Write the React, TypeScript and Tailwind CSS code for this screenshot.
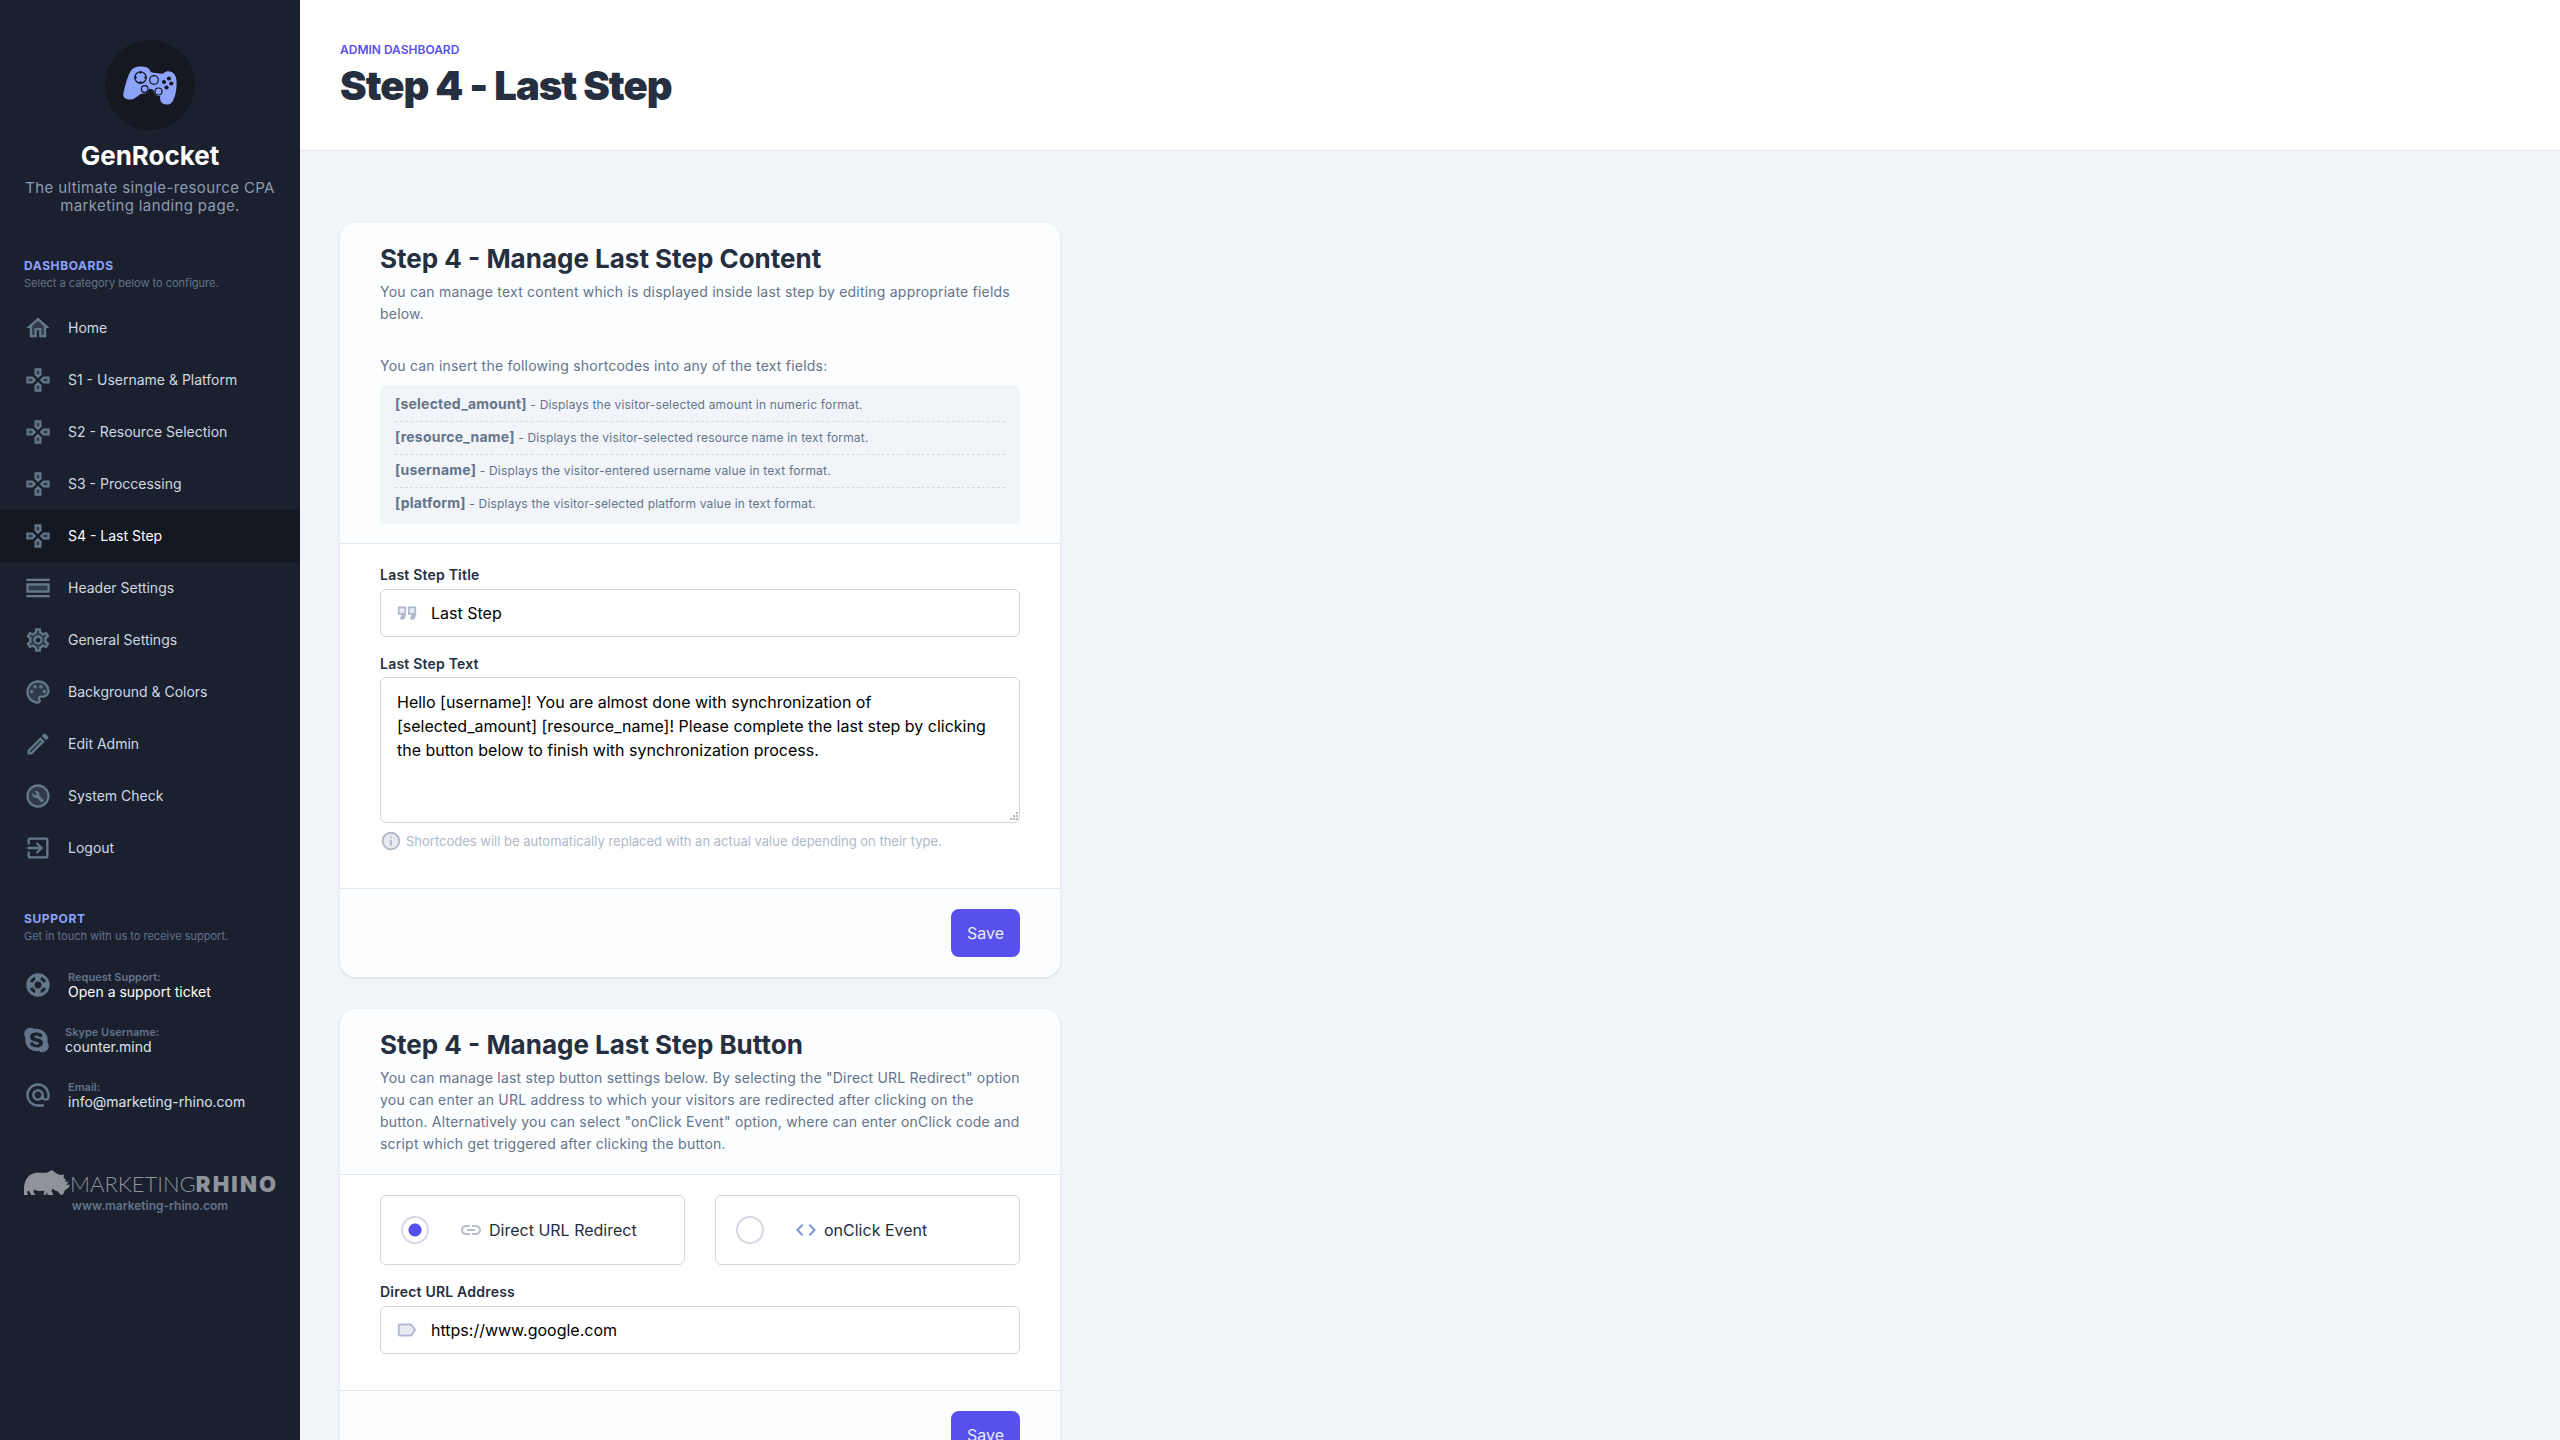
import { useState } from "react";
import type { ReactNode } from "react";
import { FaSkype } from "react-icons/fa";

type IconProps = { className?: string };

function Icon({ className, children }: { className?: string; children: ReactNode }) {
  return (
    <svg viewBox="0 0 24 24" fill="currentColor" aria-hidden="true" className={className}>
      {children}
    </svg>
  );
}

const HomeIcon = (p: IconProps) => (
  <Icon {...p}>
    <path d="M5 10v10h5v-6h4v6h5V10l-7-6.3z" opacity=".3" />
    <path d="M12 3L2 12h3v8h6v-6h2v6h6v-8h3L12 3zm5 15h-2v-6H9v6H7v-7.81l5-4.5 5 4.5V18z" />
  </Icon>
);

const GamesIcon = (p: IconProps) => (
  <Icon {...p}>
    <path d="M11 6.67l1 1 1-1V4h-2zM16.33 12l1 1H20v-2h-2.67zM4 11v2h2.67l1-1-1-1zm7 6.33V20h2v-2.67l-1-1z" opacity=".3" />
    <path d="M2 9v6h5.5l3-3-3-3H2zm4.67 4H4v-2h2.67l1 1-1 1zM22 9h-5.5l-3 3 3 3H22V9zm-2 4h-2.67l-1-1 1-1H20v2zm-5 3.5l-3-3-3 3V22h6v-5.5zM13 20h-2v-2.67l1-1 1 1V20zM9 7.5l3 3 3-3V2H9v5.5zM11 4h2v2.67l-1 1-1-1V4z" />
  </Icon>
);

const HeaderIcon = (p: IconProps) => (
  <Icon {...p}>
    <path d="M4 10h16v4H4z" opacity=".3" />
    <path d="M2 4h20v2H2zM2 18h20v2H2zM2 8v8h20V8H2zm18 6H4v-4h16v4z" />
  </Icon>
);

const SettingsIcon = (p: IconProps) => (
  <Icon {...p}>
    <path d="M19.28 8.6l-.7-1.21-1.27.51-1.06.43-.91-.7c-.39-.3-.8-.54-1.23-.71l-1.06-.43-.16-1.13L12.7 4h-1.4l-.19 1.35-.16 1.13-1.06.44c-.41.17-.82.41-1.25.73l-.9.68-1.05-.42-1.27-.52-.7 1.21 1.08.84.89.7-.14 1.13c-.03.3-.05.53-.05.73s.02.43.05.73l.14 1.13-.89.7-1.08.84.7 1.21 1.27-.51 1.06-.43.91.7c.39.3.8.54 1.23.71l1.06.43.16 1.13.19 1.36h1.39l.19-1.35.16-1.13 1.06-.43c.41-.17.82-.41 1.25-.73l.9-.68 1.04.42 1.27.51.7-1.21-1.08-.84-.89-.7.14-1.13c.04-.31.05-.52.05-.73 0-.21-.02-.43-.05-.73l-.14-1.13.89-.7 1.1-.84zM12 16c-2.21 0-4-1.79-4-4s1.79-4 4-4 4 1.79 4 4-1.79 4-4 4z" opacity=".3" />
    <path d="M19.43 12.98c.04-.32.07-.64.07-.98 0-.34-.03-.66-.07-.98l2.11-1.65c.19-.15.24-.42.12-.64l-2-3.46c-.09-.16-.26-.25-.44-.25-.06 0-.12.01-.17.03l-2.49 1c-.52-.4-1.08-.73-1.69-.98l-.38-2.65C14.46 2.18 14.25 2 14 2h-4c-.25 0-.46.18-.49.42l-.38 2.65c-.61.25-1.17.59-1.69.98l-2.49-1c-.06-.02-.12-.03-.18-.03-.17 0-.34.09-.43.25l-2 3.46c-.13.22-.07.49.12.64l2.11 1.65c-.04.32-.07.65-.07.98s.03.66.07.98l-2.11 1.65c-.19.15-.24.42-.12.64l2 3.46c.09.16.26.25.44.25.06 0 .12-.01.17-.03l2.49-1c.52.4 1.08.73 1.69.98l.38 2.65c.03.24.24.42.49.42h4c.25 0 .46-.18.49-.42l.38-2.65c.61-.25 1.17-.59 1.69-.98l2.49 1c.06.02.12.03.18.03.17 0 .34-.09.43-.25l2-3.46c.12-.22.07-.49-.12-.64l-2.11-1.65zm-1.98-1.71c.04.31.05.52.05.73 0 .21-.02.43-.05.73l-.14 1.13.89.7 1.08.84-.7 1.21-1.27-.51-1.04-.42-.9.68c-.43.32-.84.56-1.25.73l-1.06.43-.16 1.13-.2 1.35h-1.4l-.19-1.35-.16-1.13-1.06-.43c-.43-.18-.83-.41-1.23-.71l-.91-.7-1.06.43-1.27.51-.7-1.21 1.08-.84.89-.7-.14-1.13c-.03-.31-.05-.54-.05-.74s.02-.43.05-.73l.14-1.13-.89-.7-1.08-.84.7-1.21 1.27.51 1.04.42.9-.68c.43-.32.84-.56 1.25-.73l1.06-.43.16-1.13.2-1.35h1.39l.19 1.35.16 1.13 1.06.43c.43.18.83.41 1.23.71l.91.7 1.06-.43 1.27-.51.7 1.21-1.07.85-.89.7.14 1.13zM12 8c-2.21 0-4 1.79-4 4s1.79 4 4 4 4-1.79 4-4-1.79-4-4-4zm0 6c-1.1 0-2-.9-2-2s.9-2 2-2 2 .9 2 2-.9 2-2 2z" />
  </Icon>
);

const PaletteIcon = (p: IconProps) => (
  <Icon {...p}>
    <path d="M12 4c-4.41 0-8 3.59-8 8s3.59 8 8 8c.28 0 .5-.22.5-.5 0-.16-.08-.28-.14-.35-.41-.46-.63-1.05-.63-1.65 0-1.38 1.12-2.5 2.5-2.5H16c2.21 0 4-1.79 4-4 0-3.86-3.59-7-8-7z" opacity=".3" />
    <path d="M12 2C6.49 2 2 6.49 2 12s4.49 10 10 10c1.38 0 2.5-1.12 2.5-2.5 0-.61-.23-1.21-.64-1.67-.08-.09-.13-.21-.13-.33 0-.28.22-.5.5-.5H16c3.31 0 6-2.69 6-6 0-4.96-4.49-9-10-9zm4 13h-1.77c-1.38 0-2.5 1.12-2.5 2.5 0 .61.22 1.19.63 1.65.06.07.14.19.14.35 0 .28-.22.5-.5.5-4.41 0-8-3.59-8-8s3.59-8 8-8 8 3.14 8 7c0 2.21-1.79 4-4 4z" />
    <circle cx="6.5" cy="11.5" r="1.5" />
    <circle cx="9.5" cy="7.5" r="1.5" />
    <circle cx="14.5" cy="7.5" r="1.5" />
    <circle cx="17.5" cy="11.5" r="1.5" />
  </Icon>
);

const EditIcon = (p: IconProps) => (
  <Icon {...p}>
    <path d="M5 18.08V19h.92l9.06-9.06-.92-.92z" opacity=".3" />
    <path d="M20.71 7.04a.996.996 0 000-1.41l-2.34-2.34c-.2-.2-.45-.29-.71-.29s-.51.1-.7.29l-1.83 1.83 3.75 3.75 1.83-1.83zM3 17.25V21h3.75L17.81 9.94l-3.75-3.75L3 17.25zM5.92 19H5v-.92l9.06-9.06.92.92L5.92 19z" />
  </Icon>
);

const BuildIcon = (p: IconProps) => (
  <Icon {...p}>
    <circle cx="12" cy="12" r="9" opacity=".3" />
    <path d="M12 2C6.48 2 2 6.48 2 12s4.48 10 10 10 10-4.48 10-10S17.52 2 12 2zm0 18c-4.41 0-8-3.59-8-8s3.59-8 8-8 8 3.59 8 8-3.59 8-8 8z" />
    <path d="M16.9 15.49l-3.78-3.78c.43-1.06.18-2.33-.69-3.19-.94-.95-2.38-1.11-3.49-.48l2.06 2.06-1.4 1.4-2.07-2.07c-.64 1.1-.48 2.54.48 3.49.86.87 2.13 1.12 3.19.69l3.78 3.78c.19.19.49.19.68 0l1.24-1.22c.19-.19.19-.49 0-.68z" />
  </Icon>
);

const LogoutIcon = (p: IconProps) => (
  <Icon {...p}>
    <path d="M10.09 15.59L11.5 17l5-5-5-5-1.41 1.41L12.67 11H3v2h9.67l-2.58 2.59zM19 3H5c-1.11 0-2 .9-2 2v4h2V5h14v14H5v-4H3v4c0 1.1.89 2 2 2h14c1.1 0 2-.9 2-2V5c0-1.1-.9-2-2-2z" />
  </Icon>
);

const SupportIcon = (p: IconProps) => (
  <Icon {...p}>
    <path
      fillRule="evenodd"
      d="M12 2a10 10 0 100 20 10 10 0 000-20zM12 9a3 3 0 110 6 3 3 0 010-6zM15 5a8 8 0 014 4l-2.4 1a5 5 0 00-2.6-2.6zM9 5l1 2.4a5 5 0 00-2.6 2.6L5 9a8 8 0 014-4zM5 15l2.4-1a5 5 0 002.6 2.6L9 19a8 8 0 01-4-4zM15 19l-1-2.4a5 5 0 002.6-2.6l2.4 1a8 8 0 01-4 4z"
    />
  </Icon>
);

const EmailIcon = (p: IconProps) => (
  <Icon {...p}>
    <path d="M12 2C6.48 2 2 6.48 2 12s4.48 10 10 10h5v-2h-5c-4.34 0-8-3.66-8-8s3.66-8 8-8 8 3.66 8 8v1.43c0 .79-.71 1.57-1.5 1.57s-1.5-.78-1.5-1.57V12c0-2.76-2.24-5-5-5s-5 2.24-5 5 2.24 5 5 5c1.38 0 2.64-.56 3.54-1.47.65.89 1.77 1.47 2.96 1.47 1.97 0 3.5-1.6 3.5-3.57V12c0-5.52-4.48-10-10-10zm0 13c-1.66 0-3-1.34-3-3s1.34-3 3-3 3 1.34 3 3-1.34 3-3 3z" />
  </Icon>
);

const QuoteIcon = (p: IconProps) => (
  <Icon {...p}>
    <path d="M4 8v4h5V8zm11 0v4h5V8z" opacity=".3" />
    <path
      fillRule="evenodd"
      d="M2 5h9v9l-2 5H4l2-5H2zM4 7v5h5V7zM13 5h9v9l-2 5h-5l2-5h-4zM15 7v5h5V7z"
    />
  </Icon>
);

const InfoIcon = (p: IconProps) => (
  <Icon {...p}>
    <circle cx="12" cy="12" r="9" opacity=".3" />
    <path d="M11 7h2v2h-2zm0 4h2v6h-2zm1-9C6.48 2 2 6.48 2 12s4.48 10 10 10 10-4.48 10-10S17.52 2 12 2zm0 18c-4.41 0-8-3.59-8-8s3.59-8 8-8 8 3.59 8 8-3.59 8-8 8z" />
  </Icon>
);

const LinkIcon = (p: IconProps) => (
  <Icon {...p}>
    <path d="M17 7h-4v2h4c1.65 0 3 1.35 3 3s-1.35 3-3 3h-4v2h4c2.76 0 5-2.24 5-5s-2.24-5-5-5zm-6 8H7c-1.65 0-3-1.35-3-3s1.35-3 3-3h4V7H7c-2.76 0-5 2.24-5 5s2.24 5 5 5h4v-2zm-3-4h8v2H8z" />
  </Icon>
);

const CodeIcon = (p: IconProps) => (
  <Icon {...p}>
    <path d="M9.4 16.6L4.8 12l4.6-4.6L8 6l-6 6 6 6 1.4-1.4zm5.2 0l4.6-4.6-4.6-4.6L16 6l6 6-6 6-1.4-1.4z" />
  </Icon>
);

const LabelIcon = (p: IconProps) => (
  <Icon {...p}>
    <path d="M16 7H4v10h12l3.55-5z" opacity=".3" />
    <path d="M17.63 5.84C17.27 5.33 16.67 5 16 5H4C2.9 5 2 5.9 2 7v10c0 1.1.9 2 2 2h12c.67 0 1.27-.33 1.63-.84L22 12l-4.37-6.16zM16 17H4V7h12l3.55 5L16 17z" />
  </Icon>
);

function Gamepad() {
  return (
    <svg viewBox="0 0 54 39" className="w-[54px]" aria-hidden="true">
      <path
        fill="#8da2fb"
        d="M17 .5c4-.5 8 .5 9.500 3 .8 1.500 1 2.500 2.500 3l10 1.200C41 7.500 42 5.200 45 5.200c5.500 0 8 4 8.500 9 .5 8-1 17-4.500 22-2 2.500-5 2.800-8 1.800-4-1.500-4-5-3.800-8-2.500.5-5.700-.8-6.200-4.500-.2-2-2-2.500-5-2.500-.5 3-3 4.800-6 4.500-4 .5-6 4-9.500 5.500-3 1-6.500.5-8.500-.8C-.5 30.500.2 28 1 24.500 2.500 18 4.500 10 8 4.500 10 1.500 13 .8 17 .5z"
      />
      <g fill="none" stroke="#141821" strokeWidth="1.2">
        <circle cx="17.5" cy="11.5" r="5.700" />
        <circle cx="31" cy="14" r="4.300" />
        <circle cx="21.7" cy="23" r="3.300" />
        <circle cx="35.5" cy="25.500" r="3.500" />
      </g>
      <g fill="#141821">
        <circle cx="17.5" cy="6.500" r="1.200" />
        <circle cx="22.5" cy="11.500" r="1.200" />
        <circle cx="17.5" cy="16.500" r="1.200" />
        <circle cx="12.5" cy="11.500" r="1.200" />
        <circle cx="46" cy="12.500" r="2.100" />
        <circle cx="41" cy="16" r="2.100" />
        <circle cx="48.3" cy="17.500" r="2.100" />
        <circle cx="43.5" cy="21.500" r="2.100" />
      </g>
    </svg>
  );
}

function Rhino() {
  return (
    <svg viewBox="0 0 46 26" className="w-[46px] shrink-0" fill="currentColor" aria-hidden="true">
      <path d="M0 25c0-4-.5-8 1-13C3 7 6 4 11 3c4-1 8 .5 12-.5 2-.8 3-1.500 5-2.500 2.500 2 5 4 8 5l4-.5-.5 3 2.500 2.500-1 2 4-.5-3 3.500 4-.5c-.5 2.500-2 4-5 5.500-1 2-1.500 4-2.500 5-2-.2-3.500-1.500-4.500-3.500-2-.5-4-1.500-5.500-3l-1 2.500 2 4h-6l-.5-3-1.500 3h-2l1-4.500c-4 1-8 .5-10.500-1L9.500 22l2 3H7l-2-4.500L3 22l1 3z" />
    </svg>
  );
}

const NAV = [
  { label: "Home", icon: HomeIcon },
  { label: "S1 - Username & Platform", icon: GamesIcon },
  { label: "S2 - Resource Selection", icon: GamesIcon },
  { label: "S3 - Proccessing", icon: GamesIcon },
  { label: "S4 - Last Step", icon: GamesIcon, active: true },
  { label: "Header Settings", icon: HeaderIcon },
  { label: "General Settings", icon: SettingsIcon },
  { label: "Background & Colors", icon: PaletteIcon },
  { label: "Edit Admin", icon: EditIcon },
  { label: "System Check", icon: BuildIcon },
  { label: "Logout", icon: LogoutIcon },
];

const SHORTCODES = [
  { code: "[selected_amount]", text: "Displays the visitor-selected amount in numeric format." },
  { code: "[resource_name]", text: "Displays the visitor-selected resource name in text format." },
  { code: "[username]", text: "Displays the visitor-entered username value in text format." },
  { code: "[platform]", text: "Displays the visitor-selected platform value in text format." },
];

function SectionTitle({ title, text }: { title: string; text: string }) {
  return (
    <div className="px-6">
      <h2 className="text-xs leading-4 font-bold tracking-wider text-[#8da2fb] uppercase">{title}</h2>
      <p className="text-[11px] leading-[18px] text-[#64748b]">{text}</p>
    </div>
  );
}

function ContactText({ label, children }: { label: string; children: ReactNode }) {
  return (
    <div>
      <div className="text-[11px] leading-[14px] font-semibold text-[#64748b]">{label}</div>
      <div className="text-sm leading-4 text-[#dbe4ee]">{children}</div>
    </div>
  );
}

function Sidebar() {
  return (
    <aside className="w-[300px] shrink-0 bg-[#1a202e] text-[#cfd8e3]">
      <div className="flex flex-col items-center px-6 pt-10 text-center">
        <div className="flex size-[90px] items-center justify-center rounded-full bg-[#141821]">
          <Gamepad />
        </div>
        <div className="mt-2 text-[26px] leading-9 font-bold text-white">GenRocket</div>
        <p className="mt-[5px] text-[15px] leading-[18px] tracking-wide text-[#8d9bb0]">
          The ultimate single-resource CPA marketing landing page.
        </p>
      </div>

      <div className="mt-[43px]">
        <SectionTitle title="Dashboards" text="Select a category below to configure." />
      </div>
      <nav className="mt-2.5">
        {NAV.map(({ label, icon: NavIcon, active }) => (
          <a
            key={label}
            href="#"
            className={`flex h-[52px] items-center gap-4 px-6 text-sm ${active ? "bg-[#141821] text-white" : ""}`}
          >
            <NavIcon className="size-7 text-[#64788a]" />
            {label}
          </a>
        ))}
      </nav>

      <div className="mt-[37px]">
        <SectionTitle title="Support" text="Get in touch with us to receive support." />
      </div>
      <ul className="mt-3 px-6">
        <li className="flex h-[55px] items-center gap-4">
          <SupportIcon className="size-7 text-[#64788a]" />
          <ContactText label="Request Support:">
            <a href="#" className="text-white">
              Open a support ticket
            </a>
          </ContactText>
        </li>
        <li className="flex h-[55px] items-center gap-4">
          <FaSkype className="h-7 w-[25px] text-[#64748b]" />
          <ContactText label="Skype Username:">counter.mind</ContactText>
        </li>
        <li className="flex h-[55px] items-center gap-4">
          <EmailIcon className="size-7 text-[#64788a]" />
          <ContactText label="Email:">info@marketing-rhino.com</ContactText>
        </li>
      </ul>

      <a href="#" className="mt-12 block px-6 text-center">
        <div className="flex items-end whitespace-nowrap text-[#8f939b]">
          <Rhino />
          <span className="font-[Lato] text-[22px] leading-6 font-light">MARKETING</span>
          <span className="text-[22px] leading-6 font-black tracking-widest">RHINO</span>
        </div>
        <span className="block text-xs leading-5 font-semibold text-[#64748b]">www.marketing-rhino.com</span>
      </a>
    </aside>
  );
}

function Card({ title, intro, children }: { title: string; intro: ReactNode; children: ReactNode }) {
  return (
    <form
      className="overflow-hidden rounded-2xl bg-white shadow-[0_1px_3px_rgba(0,0,0,0.12)]"
      onSubmit={(e) => e.preventDefault()}
    >
      <div className="border-b border-[#e2e8f0] bg-[#fbfdfe] px-10 pt-5 pb-[19px] text-sm leading-[22px] tracking-[0.015em] text-[#64748b]">
        <h2 className="mb-1.5 text-[26px] leading-8 font-bold tracking-normal text-[#252f3f]">{title}</h2>
        {intro}
      </div>
      <div className="px-10 pt-5 pb-9">{children}</div>
      <div className="flex justify-end border-t border-[#e2e8f0] bg-[#fbfdfe] px-10 py-5">
        <button type="submit" className="h-12 rounded-lg bg-[#5850ec] px-4 text-base text-[#e5edff]">
          Save
        </button>
      </div>
    </form>
  );
}

const LABEL = "block text-sm leading-[22px] font-semibold tracking-[0.015em] text-[#252f3f]";
const FIELD = "block w-full rounded-md border border-[#d2d6dc] bg-white text-base text-black";

function TextField({ id, label, value, icon }: { id: string; label: string; value: string; icon: ReactNode }) {
  return (
    <div>
      <label htmlFor={id} className={LABEL}>
        {label}
      </label>
      <div className="relative mt-[3px]">
        <span className="absolute inset-y-0 left-4 flex items-center text-[#b0b8d0]">{icon}</span>
        <input id={id} type="text" defaultValue={value} className={`${FIELD} h-12 pr-4 pl-[50px]`} />
      </div>
    </div>
  );
}

function RadioOption({
  label,
  icon,
  checked,
  onChange,
}: {
  label: string;
  icon: ReactNode;
  checked: boolean;
  onChange: () => void;
}) {
  return (
    <label className="flex h-[70px] flex-1 items-center rounded-md border border-[#d2d6dc] px-5 text-[#252f3f]">
      <input
        type="radio"
        name="button-type"
        checked={checked}
        onChange={onChange}
        className="mr-[30px] size-7 appearance-none rounded-full border-2 border-[#d5d9e4] bg-white checked:bg-[radial-gradient(circle,#5850ec_6px,transparent_7px)]"
      />
      {icon}
      <span className="ml-1.5">{label}</span>
    </label>
  );
}

export default function App() {
  const [buttonType, setButtonType] = useState("url");

  return (
    <div className="flex h-screen overflow-hidden bg-[#f1f5f9] font-[Inter,sans-serif]">
      <Sidebar />
      <div className="min-w-0 flex-1">
        <header className="border-b border-[#e2e8f0] bg-white px-10 py-10">
          <div className="text-xs leading-5 font-semibold text-[#5850ec] uppercase">Admin Dashboard</div>
          <h1 className="mt-[3px] mb-px text-[40px] leading-[46px] font-black tracking-tight text-[#252f3f]">
            Step 4 - Last Step
          </h1>
        </header>

        <main className="flex max-w-[800px] flex-col gap-8 px-10 pt-[72px]">
          <Card
            title="Step 4 - Manage Last Step Content"
            intro={
              <>
                <p>
                  You can manage text content which is displayed inside last step by editing appropriate fields below.
                </p>
                <p className="mt-[30px] mb-2">You can insert the following shortcodes into any of the text fields:</p>
                <ul className="divide-y divide-dashed divide-[#d3dae4] rounded-md bg-[#f1f5f9] px-[15px] py-1">
                  {SHORTCODES.map(({ code, text }) => (
                    <li key={code} className="text-xs leading-8 tracking-[0.015em]">
                      <strong className="text-sm leading-none font-bold tracking-[0.015em]">{code}</strong> - {text}
                    </li>
                  ))}
                </ul>
              </>
            }
          >
            <TextField
              id="title"
              label="Last Step Title"
              value="Last Step"
              icon={<QuoteIcon className="size-[22px]" />}
            />
            <label htmlFor="text" className={`mt-4 ${LABEL}`}>
              Last Step Text
            </label>
            <div className="relative mt-0.5">
              <textarea
                id="text"
                className={`${FIELD} h-[146px] resize-none px-4 py-3 leading-6`}
                defaultValue="Hello [username]! You are almost done with synchronization of [selected_amount] [resource_name]! Please complete the last step by clicking the button below to finish with synchronization process."
              />
              <svg viewBox="0 0 9 9" fill="#b4b8be" className="absolute right-0.5 bottom-0.5 size-[9px]" aria-hidden="true">
                <path d="M7 0h2v2H7zM7 3h2v2H7zM4 3h2v2H4zM7 6h2v2H7zM4 6h2v2H4zM1 6h2v2H1z" />
              </svg>
            </div>
            <p className="mt-[7px] flex items-center gap-1 text-[13px] leading-[22px] text-[#b0b9c9]">
              <InfoIcon className="size-[22px]" />
              Shortcodes will be automatically replaced with an actual value depending on their type.
            </p>
          </Card>

          <Card
            title="Step 4 - Manage Last Step Button"
            intro={
              <p>
                You can manage last step button settings below. By selecting the "Direct URL Redirect" option you can
                enter an URL address to which your visitors are redirected after clicking on the button. Alternatively
                you can select "onClick Event" option, where can enter onClick code and script which get triggered after
                clicking the button.
              </p>
            }
          >
            <div className="mb-4 flex gap-[30px]">
              <RadioOption
                label="Direct URL Redirect"
                icon={<LinkIcon className="size-6 text-[#b9bfcc]" />}
                checked={buttonType === "url"}
                onChange={() => setButtonType("url")}
              />
              <RadioOption
                label="onClick Event"
                icon={<CodeIcon className="size-6 text-[#7c95d8]" />}
                checked={buttonType === "click"}
                onChange={() => setButtonType("click")}
              />
            </div>
            <TextField
              id="url"
              label="Direct URL Address"
              value="https://www.google.com"
              icon={<LabelIcon className="size-[22px]" />}
            />
          </Card>
        </main>
      </div>
    </div>
  );
}
